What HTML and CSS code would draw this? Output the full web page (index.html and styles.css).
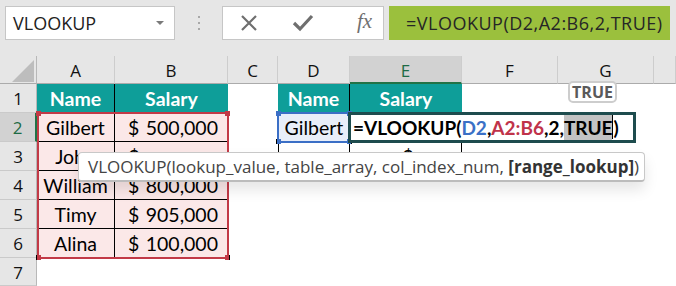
FILE: index.html
```html
<!DOCTYPE html>
<html lang="en">
<head>
  <meta charset="UTF-8">
  <title>VLOOKUP</title>
  <link rel="stylesheet" href="styles.css">
</head>
<body>

<!-- Name box + formula bar -->
<div class="topbar">
  <div class="namebox">
    <span>VLOOKUP</span>
    <span class="caret"></span>
  </div>
  <div class="grip"><i></i><i></i><i></i></div>
  <div class="buttons">
    <svg class="btn" width="20" height="20" viewBox="0 0 20 20">
      <path d="M3 3 L17 17 M17 3 L3 17" stroke="#6f6f6f" stroke-width="2.2" fill="none"/>
    </svg>
    <svg class="btn" width="22" height="20" viewBox="0 0 22 20">
      <path d="M2 10 L8 16 L20 3" stroke="#6f6f6f" stroke-width="3.2" fill="none"/>
    </svg>
    <span class="fx">fx</span>
  </div>
  <div class="formula">=VLOOKUP(D2,A2:B6,2,TRUE)</div>
</div>

<!-- Sheet -->
<div class="sheet">
  <div class="grid">
    <!-- column headers -->
    <div class="hd corner"><span class="tri"></span></div>
    <div class="hd">A</div>
    <div class="hd">B</div>
    <div class="hd">C</div>
    <div class="hd">D</div>
    <div class="hd active-col">E</div>
    <div class="hd">F</div>
    <div class="hd">G</div>
    <div class="hd"></div>

    <!-- row 1 -->
    <div class="rh">1</div>
    <div class="c teal br">Name</div>
    <div class="c teal">Salary</div>
    <div class="c"></div>
    <div class="c teal br">Name</div>
    <div class="c teal">Salary</div>
    <div class="c"></div>
    <div class="c"></div>
    <div class="c"></div>

    <!-- row 2 -->
    <div class="rh active-row">2</div>
    <div class="c pink br bb">Gilbert</div>
    <div class="c pink bb money"><span>$</span><span>500,000</span></div>
    <div class="c"></div>
    <div class="c lookup bl br">Gilbert</div>
    <div class="c"></div>
    <div class="c"></div>
    <div class="c"></div>
    <div class="c"></div>

    <!-- row 3 (mostly under the tooltip) -->
    <div class="rh">3</div>
    <div class="c pink br bb">John</div>
    <div class="c pink bb money"><span>$</span><span></span></div>
    <div class="c"></div>
    <div class="c bl br"></div>
    <div class="c br peek"><span>$</span></div>
    <div class="c"></div>
    <div class="c"></div>
    <div class="c"></div>

    <!-- row 4 -->
    <div class="rh">4</div>
    <div class="c pink br bb">William</div>
    <div class="c pink bb money"><span>$</span><span>800,000</span></div>
    <div class="c"></div>
    <div class="c"></div>
    <div class="c"></div>
    <div class="c"></div>
    <div class="c"></div>
    <div class="c"></div>

    <!-- row 5 -->
    <div class="rh">5</div>
    <div class="c pink br bb">Timy</div>
    <div class="c pink bb money"><span>$</span><span>905,000</span></div>
    <div class="c"></div>
    <div class="c"></div>
    <div class="c"></div>
    <div class="c"></div>
    <div class="c"></div>
    <div class="c"></div>

    <!-- row 6 -->
    <div class="rh">6</div>
    <div class="c pink br">Alina</div>
    <div class="c pink money"><span>$</span><span>100,000</span></div>
    <div class="c"></div>
    <div class="c"></div>
    <div class="c"></div>
    <div class="c"></div>
    <div class="c"></div>
    <div class="c"></div>

    <!-- row 7 -->
    <div class="rh">7</div>
    <div class="c"></div>
    <div class="c"></div>
    <div class="c"></div>
    <div class="c"></div>
    <div class="c"></div>
    <div class="c"></div>
    <div class="c"></div>
    <div class="c"></div>
  </div>

  <!-- range highlights -->
  <div class="range red">
    <i class="h tl"></i><i class="h tr"></i><i class="h bl"></i><i class="h br"></i>
  </div>
  <div class="range blue">
    <i class="h tl"></i><i class="h tr"></i><i class="h bl"></i><i class="h br"></i>
  </div>

  <!-- in-cell editor -->
  <div class="editor">=VLOOKUP(<span class="ref-d">D2</span>,<span class="ref-a">A2:B6</span>,2,<span class="sel">TRUE</span><span class="cursor"></span>)</div>

  <!-- tooltips -->
  <div class="tip-true">TRUE</div>
  <div class="tip-args">VLOOKUP(lookup_value, table_array, col_index_num, <b>[range_lookup]</b>)</div>
</div>

</body>
</html>
```

FILE: styles.css
```css
* {
  box-sizing: border-box;
}

body {
  margin: 0;
  background: #fff;
  font-family: "Open Sans", sans-serif;
  overflow: hidden;
}

/* Top bar */
.topbar {
  height: 56px;
  background: #e6e6e6;
  display: flex;
  align-items: flex-start;
  padding: 6px 0 0 5px;
}

.namebox {
  width: 170px;
  height: 34px;
  background: #fff;
  border: 1px solid #c6c6c6;
  display: flex;
  align-items: center;
  justify-content: space-between;
  padding: 0 10px 0 7px;
  font-size: 18px;
  color: #222;
}

.caret {
  width: 0;
  height: 0;
  border-left: 4px solid transparent;
  border-right: 4px solid transparent;
  border-top: 4px solid #7a7a7a;
}

.grip {
  width: 47px;
  height: 34px;
  display: flex;
  flex-direction: column;
  align-items: center;
  justify-content: center;
  gap: 4px;
}

.grip i {
  width: 2px;
  height: 2px;
  background: #a8a8a8;
}

.buttons {
  width: 162px;
  height: 34px;
  background: #fff;
  border: 1px solid #c6c6c6;
  display: flex;
  align-items: center;
  padding-left: 16px;
  gap: 33px;
}

.fx {
  font-family: "Liberation Serif", serif;
  font-style: italic;
  font-size: 21px;
  color: #707070;
  margin-left: 10px;
  margin-top: -3px;
}

.formula {
  margin-left: 5px;
  width: 281px;
  height: 34px;
  background: #9bc03d;
  color: #262626;
  font-size: 18px;
  letter-spacing: 0.5px;
  line-height: 34px;
  padding-left: 17px;
  white-space: nowrap;
  overflow: hidden;
}

/* Sheet */
.sheet {
  position: relative;
}

.grid {
  display: grid;
  grid-template-columns: 37px 78px 113px 50px 72px 112px 96px 96px 1fr;
  grid-template-rows: 28px repeat(6, 29px) 28px;
}

.hd {
  background: #e6e6e6;
  border-right: 1px solid #cdcdcd;
  border-bottom: 1px solid #ababab;
  text-align: center;
  font-size: 17px;
  line-height: 28px;
  padding-top: 1px;
  color: #111;
}

.corner {
  position: relative;
  border-right: 1px solid #b8b8b8;
}

.tri {
  position: absolute;
  right: 2px;
  bottom: 1px;
  width: 0;
  height: 0;
  border-left: 22px solid transparent;
  border-bottom: 22px solid #bdbdbd;
}

.active-col {
  background: #d2d2d2;
  color: #1d6b45;
  border-bottom: 2px solid #217346;
}

.rh {
  background: #e6e6e6;
  border-right: 1px solid #b8b8b8;
  border-bottom: 1px solid #cacaca;
  text-align: center;
  font-size: 17px;
  line-height: 29px;
  color: #111;
}

.active-row {
  background: #d2d2d2;
  color: #1d6b45;
  border-right: 2px solid #217346;
}

.c {
  font-family: Lato, sans-serif;
  font-size: 19.5px;
  line-height: 29px;
  text-align: center;
  color: #000;
  white-space: nowrap;
}

.teal {
  background: #0e9e99;
  color: #fff;
  font-weight: bold;
}

.pink {
  background: #fbe8e8;
}

.lookup {
  background: #e8eef9;
}

.br {
  border-right: 1px solid #000;
}

.bl {
  border-left: 1px solid #000;
}

.bb {
  border-bottom: 1px solid #000;
}

.money {
  display: flex;
  justify-content: space-between;
  padding: 0 10px 0 13px;
}

.peek {
  text-align: left;
  padding-left: 52px;
}

/* Range highlights */
.range {
  position: absolute;
  border: 2px solid;
}

.range .h {
  position: absolute;
  width: 5px;
  height: 5px;
}

.range .tl { left: -3px; top: -3px; }
.range .tr { right: -3px; top: -3px; }
.range .bl { left: -3px; bottom: -3px; }
.range .br { right: -3px; bottom: -3px; }

.red {
  left: 37px;
  top: 56px;
  width: 192px;
  height: 147px;
  border-color: #c23a47;
}

.red .h {
  background: #c23a47;
}

.blue {
  left: 277px;
  top: 56px;
  width: 74px;
  height: 31px;
  border-color: #3b6fc6;
}

.blue .h {
  background: #3b6fc6;
}

/* In-cell editor */
.editor {
  position: absolute;
  left: 348px;
  top: 56px;
  width: 288px;
  height: 31px;
  background: #fff;
  border: 3px solid #1e4c4e;
  font-family: Lato, sans-serif;
  font-weight: bold;
  font-size: 19px;
  line-height: 25px;
  padding-left: 2px;
  color: #000;
  white-space: nowrap;
}

.ref-d {
  color: #3b70c6;
}

.ref-a {
  color: #c0334a;
}

.sel {
  background: #c3c3c3;
  display: inline-block;
  height: 25px;
}

.cursor {
  display: inline-block;
  width: 1px;
  height: 24px;
  background: #000;
  vertical-align: top;
}

/* Tooltips */
.tip-true {
  position: absolute;
  left: 568px;
  top: 25px;
  width: 49px;
  height: 22px;
  background: #fff;
  border: 2px solid #cdcdcd;
  border-radius: 5px;
  font-size: 16px;
  font-weight: bold;
  color: #5a5a5a;
  text-align: center;
  line-height: 18px;
}

.tip-args {
  position: absolute;
  left: 78px;
  top: 96px;
  width: 567px;
  height: 30px;
  background: #fff;
  border: 1px solid #c8c8c8;
  border-bottom: 2px solid #bcbcbc;
  border-radius: 4px;
  box-shadow: 0 8px 14px rgba(0, 0, 0, 0.1);
  font-size: 17px;
  line-height: 27px;
  padding-left: 9px;
  color: #444;
  white-space: nowrap;
}

.tip-args b {
  color: #333;
}
```
